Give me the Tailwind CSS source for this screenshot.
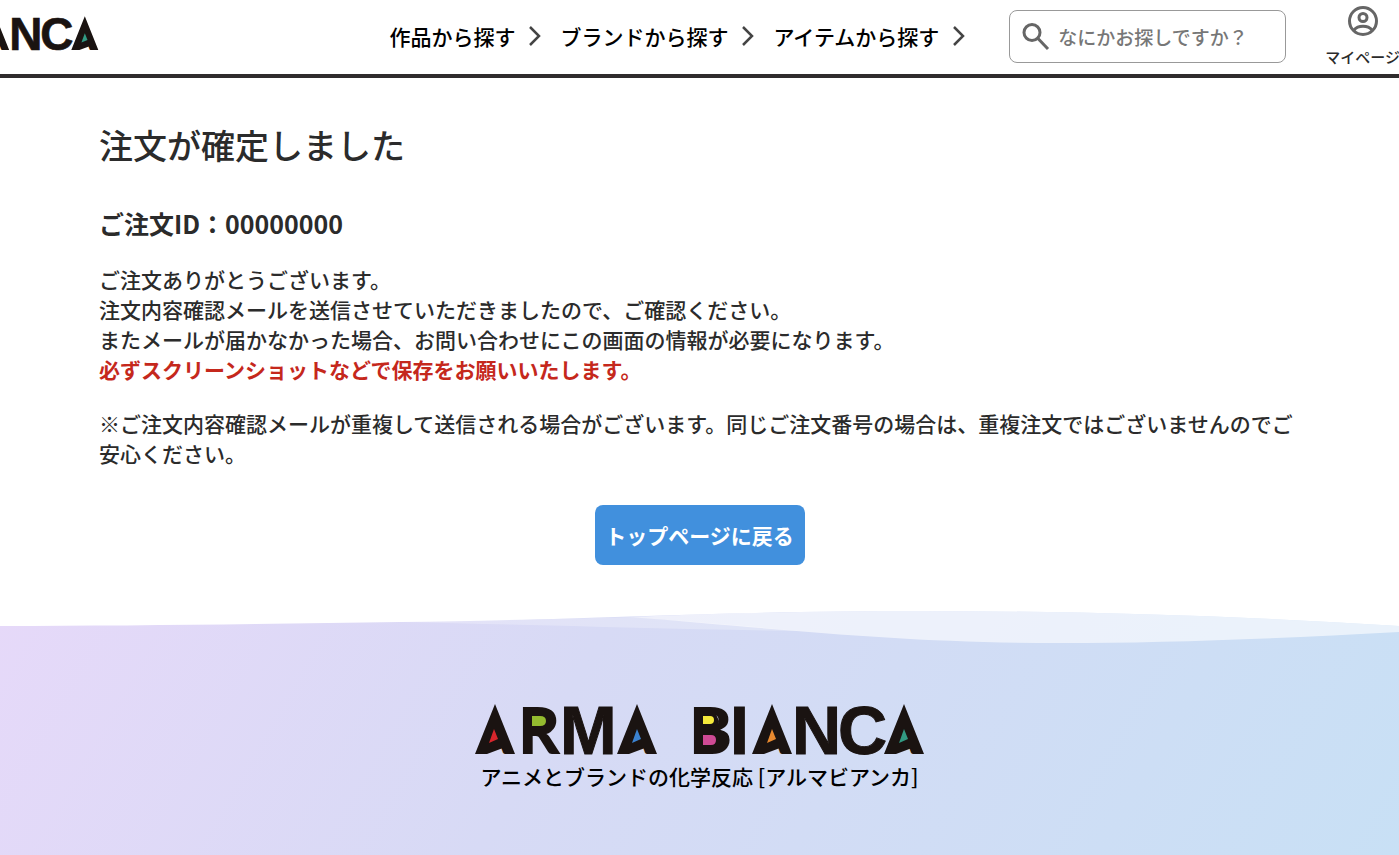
<!DOCTYPE html>
<html lang="ja">
<head>
    <meta charset="UTF-8">
    <meta name="viewport" content="width=device-width, initial-scale=1.0">
    <title>注文が確定しました | ARMA BIANCA</title>
    <script src="https://cdn.jsdelivr.net/npm/@tailwindcss/browser@4"></script>
</head>
<body class="bg-white text-[#2b2b2b] font-['Noto_Sans_CJK_JP',sans-serif] font-medium overflow-x-hidden">
    <!-- Logo -->
    <svg class="hidden" aria-hidden="true">
        <symbol id="logo" viewBox="0 0 450 54">
            <g fill="#1a1311" font-family="Lato, sans-serif" font-weight="900" font-size="65">
                <text y="50" x="43 214">RB</text>
                <text y="50" x="4 146 281 412" font-size="44">AAAA</text>
            </g>
            <g fill="#1a1311" stroke="#1a1311" font-family="Liberation Sans, sans-serif" font-weight="700" font-size="68">
                <text y="50" x="85 255 317 363">MINC</text>
            </g>
            <!-- Peaks and coloured counters -->
            <g fill="#1a1311">
                <path d="M20 0L40 50H31L28 44L12 50H0Z"/>
                <path d="M162 0L182 50H173L170 44L154 50H142Z"/>
                <path d="M297 0L317 50H308L305 44L289 50H277Z"/>
                <path d="M429 0L449 50H440L437 44L421 50H409Z"/>
                <path d="M54 8H70L74 17L70 26H54Z"/>
                <path d="M225 8H240L244 17L243 26L248 31V41L244 45H225Z"/>
            </g>
            <path fill="#d8262c" d="M19 25L23 35L14 39Z"/>
            <path fill="#94bb2f" d="M57 12H65Q71 12 71 17Q71 22 65 22H57Z"/>
            <path fill="#3b82d0" d="M162 25L166 35L157 39Z"/>
            <path fill="#f5e93b" d="M228 12H235Q239 12 239 16Q239 20 235 20H228Z"/>
            <path fill="#cf4a94" d="M228 31H236Q241 31 241 36Q241 41 236 41H228Z"/>
            <path fill="#e8892f" d="M297 25L301 35L292 39Z"/>
            <path fill="#329a83" d="M429 25L433 35L424 39Z"/>
        </symbol>
    </svg>

    <header class="flex h-[78px] border-b-4 border-[#2f2c2d] overflow-hidden">
        <a href="#" aria-label="ARMA BIANCA" class="-ml-[205px] mt-4 shrink-0">
            <svg class="w-[304px] h-[37px]"><use href="#logo"/></svg>
        </a>
        <nav class="ml-auto flex shrink-0 items-center gap-[18px] text-[21px] text-black">
            <a href="#" class="flex items-center gap-[11px]">作品から探す
                <svg class="w-4 h-6" viewBox="0 0 16 24" fill="none" stroke="#444" stroke-width="2.5"><path d="M4 2L13 11L4 20"/></svg>
            </a>
            <a href="#" class="flex items-center gap-[11px]">ブランドから探す
                <svg class="w-4 h-6" viewBox="0 0 16 24" fill="none" stroke="#444" stroke-width="2.5"><path d="M4 2L13 11L4 20"/></svg>
            </a>
            <a href="#" class="flex items-center gap-[11px]">アイテムから探す
                <svg class="w-4 h-6" viewBox="0 0 16 24" fill="none" stroke="#444" stroke-width="2.5"><path d="M4 2L13 11L4 20"/></svg>
            </a>
        </nav>
        <label class="ml-[43px] mt-[10px] flex h-[53px] w-[277px] shrink-0 items-center gap-2 rounded-lg border border-[#999] px-3">
            <svg class="w-7 h-7 shrink-0" viewBox="0 0 28 28" fill="none" stroke="#666" stroke-width="3"><circle cx="10" cy="9.5" r="8"/><path d="M16 15.5L26 26"/></svg>
            <input type="search" aria-label="商品を検索" placeholder="なにかお探しですか？" class="w-full min-w-0 pt-0.5 text-[19px] outline-none placeholder:text-[#777]">
        </label>
        <a href="#" class="ml-[39px] -mr-px mt-[5px] flex shrink-0 flex-col items-center gap-2 text-[15px] leading-6">
            <svg class="w-8 h-8 shrink-0" viewBox="0 0 32 32" fill="none" stroke="#666" stroke-width="3"><circle cx="16" cy="16" r="13.5"/><circle cx="16" cy="12.5" r="4"/><path d="M7 25C11 20 21 20 25 25"/></svg>
            マイページ
        </a>
    </header>

    <main class="mx-auto max-w-[1201px] pt-[42px] pb-[46px] text-[21px] leading-[30px]">
        <h1 class="text-[34px] leading-[50px]">注文が確定しました</h1>
        <h2 class="mt-[35px] text-[25px] leading-9 font-bold">ご注文ID：00000000</h2>
        <p class="mt-[23px]">
            ご注文ありがとうございます。<br>
            注文内容確認メールを送信させていただきましたので、ご確認ください。<br>
            またメールが届かなかった場合、お問い合わせにこの画面の情報が必要になります。<br>
            <strong class="font-bold text-[#c5281c]">必ずスクリーンショットなどで保存をお願いいたします。</strong>
        </p>
        <p class="mt-6">※ご注文内容確認メールが重複して送信される場合がございます。同じご注文番号の場合は、重複注文ではございませんのでご安心ください。</p>
        <div class="mt-[37px] flex justify-center">
            <button type="button" class="h-[60px] w-[210px] rounded-lg bg-[#4190dd] font-bold text-white">トップページに戻る</button>
        </div>
    </main>

    <footer class="bg-linear-120 from-[#e6d9f9] via-[#d7daf5] via-40% to-[#c8e0f5] text-black">
        <!-- Wave -->
        <svg class="block w-full h-10" viewBox="0 0 1399 40" preserveAspectRatio="none" fill="#fff">
            <path d="M0 0H1399V15C1240 5 1080 0 920 0C700 0 560 10 400 11C270 13 130 15 0 15Z"/>
            <path fill-opacity="0.6" d="M630 6C720 2 820 0 920 0C1080 0 1240 5 1399 15V21C1270 28 1160 32 1060 32C900 32 780 18 630 6Z"/>
            <path fill-opacity="0.25" d="M400 11C500 9 560 8 630 6C700 11 750 15 800 20C660 18 540 14 400 11Z"/>
        </svg>
        <div class="flex flex-col items-center pt-[53px] pb-[65px]">
            <a href="#" aria-label="ARMA BIANCA"><svg class="block w-[450px] h-[54px]"><use href="#logo"/></svg></a>
            <p class="mt-[3px] text-[21px] leading-[30px]">アニメとブランドの化学反応 [アルマビアンカ]</p>
        </div>
    </footer>
</body>
</html>
